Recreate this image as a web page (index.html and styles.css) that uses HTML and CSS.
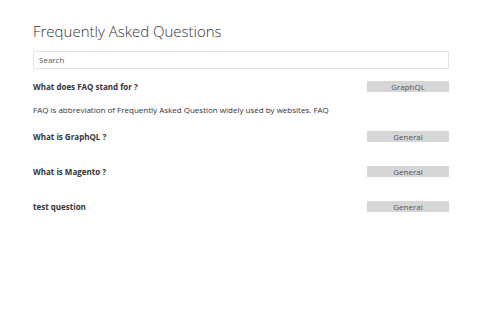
FILE: index.html
```html
<!DOCTYPE html>
<html>
<head>
<meta charset="utf-8">
<link rel="stylesheet" href="styles.css">
</head>
<body>
<div class="faq">
  <h1 class="title">Frequently Asked Questions</h1>
  <div class="search">Search</div>
  <div class="item open">
    <div class="row">
      <div class="question">What does FAQ stand for ?</div>
      <div class="badge">GraphQL</div>
    </div>
    <div class="answer">FAQ is abbreviation of Frequently Asked Question widely used by websites. FAQ</div>
  </div>
  <div class="item">
    <div class="row">
      <div class="question">What is GraphQL ?</div>
      <div class="badge">General</div>
    </div>
  </div>
  <div class="item">
    <div class="row">
      <div class="question">What is Magento ?</div>
      <div class="badge">General</div>
    </div>
  </div>
  <div class="item">
    <div class="row">
      <div class="question">test question</div>
      <div class="badge">General</div>
    </div>
  </div>
</div>
</body>
</html>
```
FILE: styles.css
```css
html, body {
  margin: 0;
  padding: 0;
  background: #fff;
}
body {
  font-family: "Open Sans", "Liberation Sans", sans-serif;
  color: #333;
}
.faq {
  width: 416px;
  padding: 20px 0 0 33px;
}
.title {
  margin: 0;
  font-size: 15px;
  font-weight: 300;
  line-height: 22px;
  color: #333;
}
.search {
  margin-top: 9px;
  height: 16px;
  border: 1px solid #e2e2e2;
  font-size: 8px;
  line-height: 16px;
  padding-left: 5px;
  color: #555;
}
.item {
  margin-top: 11px;
}
.item + .item {
  margin-top: 23px;
}
.item.open + .item {
  margin-top: 14px;
}
.row {
  display: flex;
  justify-content: space-between;
  align-items: center;
  height: 12px;
}
.question {
  font-size: 8px;
  font-weight: 700;
  color: #333;
}
.badge {
  width: 82px;
  height: 11px;
  background: #d6d6d6;
  font-size: 8px;
  line-height: 11px;
  text-align: center;
  color: #555;
}
.answer {
  margin-top: 12px;
  font-size: 8px;
  line-height: 12px;
  color: #333;
}
```
